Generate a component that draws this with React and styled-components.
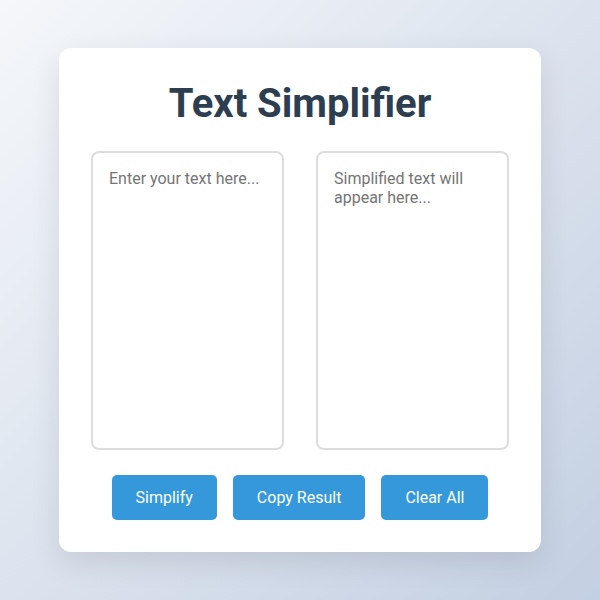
import styled, { createGlobalStyle } from "styled-components";

const GlobalStyle = createGlobalStyle`
  * { box-sizing: border-box; }
  html, body { margin: 0; padding: 0; }
  body {
    font-family: Roboto, "Liberation Sans", sans-serif;
    background: linear-gradient(135deg, #f5f7fa 0%, #c3cfe2 100%);
    min-height: 100vh;
  }
`;

const Page = styled.div`
  min-height: 100vh;
  display: flex;
  justify-content: center;
  align-items: center;
`;

const Card = styled.div`
  width: 482px;
  background: #fff;
  border-radius: 12px;
  padding: 32px;
  box-shadow: 0 10px 30px rgba(0, 0, 0, 0.1);
`;

const Title = styled.h1`
  margin: 0 0 24px;
  text-align: center;
  color: #2c3e50;
  font-size: 40px;
  font-weight: 700;
`;

const Panels = styled.div`
  display: grid;
  grid-template-columns: 1fr 1fr;
  gap: 32px;
`;

const Box = styled.textarea`
  height: 299px;
  width: 100%;
  padding: 16px;
  border: 2px solid #ddd;
  border-radius: 8px;
  font-family: Roboto, "Liberation Sans", sans-serif;
  font-size: 16px;
  line-height: 1.2;
  color: #333;
  resize: none;
  outline: none;
  &::placeholder { color: #757575; }
`;

const Actions = styled.div`
  display: flex;
  justify-content: center;
  gap: 16px;
  margin-top: 25px;
`;

const Button = styled.button`
  background: #3498db;
  color: #fff;
  border: none;
  border-radius: 5px;
  padding: 13px 24px;
  font-family: Roboto, "Liberation Sans", sans-serif;
  font-size: 16px;
  cursor: pointer;
`;

export default function App() {
  return (
    <>
      <GlobalStyle />
      <Page>
        <Card>
          <Title>Text Simplifier</Title>
          <Panels>
            <Box placeholder="Enter your text here..." />
            <Box placeholder="Simplified text will appear here..." readOnly />
          </Panels>
          <Actions>
            <Button>Simplify</Button>
            <Button>Copy Result</Button>
            <Button>Clear All</Button>
          </Actions>
        </Card>
      </Page>
    </>
  );
}
